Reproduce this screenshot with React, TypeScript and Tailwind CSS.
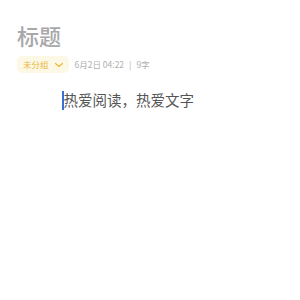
import React from 'react';

export default function App() {
  return (
    <div className="w-[300px] h-[300px] bg-white font-['Noto_Sans_CJK_SC',sans-serif]">
      <div className="pl-[17px] pt-[19px]">
        <h1 className="text-[22px] leading-[32px] font-medium text-[#a8a8a8]">标题</h1>
        <div className="mt-[5px] flex items-center">
          <div className="flex items-center gap-[3px] h-[17px] pl-[6px] pr-[5px] rounded-[5px] bg-[#fdf8e6]">
            <span className="text-[8.5px] leading-none text-[#e8b93a]">未分组</span>
            <svg width="10" height="10" viewBox="0 0 10 10" fill="none" className="ml-[2px]">
              <path d="M1.5 3.5 L5 6.5 L8.5 3.5" stroke="#e8b93a" strokeWidth="1.2" strokeLinecap="round" strokeLinejoin="round" />
            </svg>
          </div>
          <div className="ml-[6px] flex items-center text-[8.5px] leading-none text-[#b0b0b0]">
            <span>6月2日 04:22</span>
            <span className="mx-[5px]">|</span>
            <span>9字</span>
          </div>
        </div>
        <div className="mt-[17px] ml-[45px] flex items-center">
          <span className="w-[1.5px] h-[19px] bg-[#3b6fd8]" />
          <span className="text-[14.5px] leading-[20px] text-[#555555]">热爱阅读，热爱文字</span>
        </div>
      </div>
    </div>
  );
}
